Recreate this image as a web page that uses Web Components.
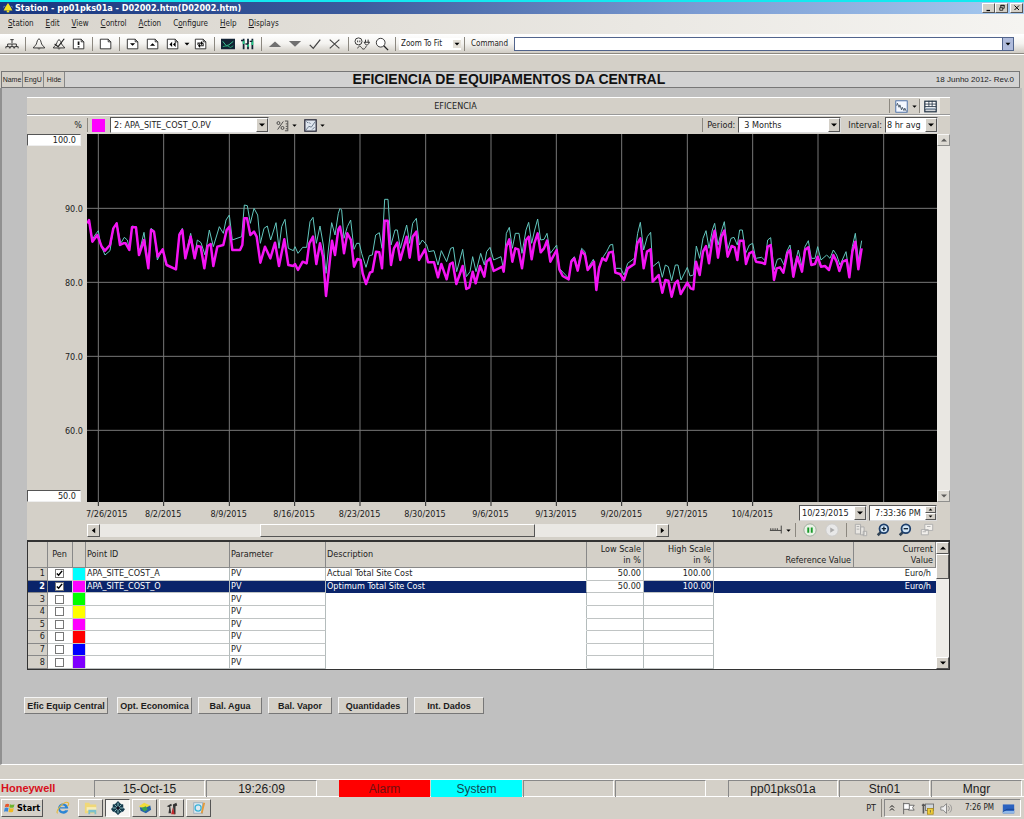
<!DOCTYPE html>
<html lang="pt">
<head>
<meta charset="utf-8">
<title>Station - pp01pks01a - D02002.htm</title>
<style>
  body { margin: 0; font: 9px/12px "DejaVu Sans Condensed", "DejaVu Sans", sans-serif; color: #1c1c1c; background: #d4d0c8; }
</style>
</head>
<body>
<station-window>
  <title-bar slot="top">Station - pp01pks01a - D02002.htm(D02002.htm)</title-bar>
  <menu-bar slot="top"></menu-bar>
  <command-bar slot="top"></command-bar>
  <display-header slot="top">EFICIENCIA DE EQUIPAMENTOS DA CENTRAL</display-header>
  <trend-panel></trend-panel>
  <nav-buttons></nav-buttons>
  <status-line slot="bottom"></status-line>
  <task-bar slot="bottom"></task-bar>
</station-window>

<script>
const RESET = `
  :host, *, *::before { box-sizing: border-box; }
  button, input, select { font: inherit; color: inherit; margin: 0; padding: 0; border: 0; border-radius: 0; background: none; outline: 0; appearance: none; min-width: 0; }
  button { display: flex; align-items: center; justify-content: center; flex: none; }
  .raised { background: #d4d0c8; border: 1px solid; border-color: #fff #555 #555 #fff; }
  .sep { flex: none; width: 1px; height: 14px; background: #8c8880; }
`;
function element(name, html, css) {
  customElements.define(name, class extends HTMLElement {
    connectedCallback() {
      if (this.shadowRoot) return;
      const root = this.attachShadow({ mode: 'open' });
      root.innerHTML = `<style>${RESET}${css}</style>` + (typeof html === 'function' ? html(this) : html);
    }
  });
}

const PAGE = '<path d="M1.5 2.5h9l3 3v8h-12z" fill="#fff" stroke="#222"/><path d="M10.500 2.500v3h3" fill="none" stroke="#222"/>';
const ICONS = {
  tree: '<path d="M8 3v4M3 11V8h10v3M8 8v3M6 3h4M1 11h4M6 11h4M11 11h4M1 11v2M5 11v2M6 11v2M10 11v2M11 11v2M15 11v2" stroke="#222" fill="none"/>',
  bell: '<path d="M8 2C6 3 6 5 5 8c-1 2-3 3-3.500 4.500h13C14 11 12 10 11 8 10 5 10 3 8 2zM7 13l1 1 1-1" fill="none" stroke="#222"/>',
  bellOff: '<path d="M8 3C6 4 6 6 5 8c-1 2-3 3-3.500 4.500h13C14 11 12 10 11 8 10 6 10 4 8 3zM7 13l1 1 1-1" fill="none" stroke="#222"/><path d="M3 8l4 3 7-9" fill="none" stroke="#222" stroke-width="1.300"/>',
  pageAlert: PAGE + '<path d="M7.500 5v4M7.500 10.500v1.500" stroke="#111" stroke-width="2"/>',
  page: PAGE,
  pageDown: PAGE + '<path d="M4.500 7h6l-3 3z"/>',
  pageUp: PAGE + '<path d="M4.500 10h6l-3-3z"/>',
  pageBack: PAGE + '<path d="M7 5.500v6l-3-3zM11 5.500v6l-3-3z"/>',
  pageRefresh: PAGE + '<path d="M4.500 9V7h4M10.500 7v3h-4" stroke="#222" fill="none" stroke-width="1.200"/><path d="M8 4.500v5l2.500-2.500zM7 7.500v5L4.500 10z"/>',
  trend: '<rect x="0" y="2" width="16" height="12" fill="#123"/><path d="M2 5l4 5 3-1 5-4" stroke="#3fd8a0" fill="none"/><path d="M2 11l5-1 4 2 3-2" stroke="#2a7" fill="none"/>',
  bars: '<path d="M3 2v12M8 2v12M13 2v12" stroke="#123" stroke-width="2"/><path d="M3 4v4M8 8v3M13 4v5" stroke="#2c8" stroke-width="2"/><path d="M0 4h3M5 8h3M10 5h3" stroke="#123" stroke-width="1.500"/>',
  up: '<path d="M1 11.500h14L8 5z" fill="#707070"/>',
  down: '<path d="M1 4.500h14L8 11z" fill="#707070"/>',
  check: '<path d="M2 9l4 4L14 3" fill="none" stroke="#444" stroke-width="1.500"/>',
  cross: '<path d="M2 3l11 10M13 3L2 13" stroke="#444" stroke-width="1.300"/>',
  assist: '<circle cx="4" cy="5" r="4" fill="none" stroke="#222"/><path d="M3 4v2M5.500 4v2M3 13c2-4 3-3 5 0 2 2 4 0 5-3M10 6h7M11 6c0 4 5 4 5 0M12 6V3M15 6V3" fill="none" stroke="#222"/>',
  search: '<circle cx="6.500" cy="6.500" r="5" fill="#fff" stroke="#222"/><path d="M10 10l5 5" stroke="#222" stroke-width="1.500"/>',
  caret: '<path d="M3 5.500h10L8 11z"/>',
  left: '<path d="M11 3v10L5 8z"/>', right: '<path d="M5 3v10l6-5z"/>',
  up2: '<path d="M2 11h12L8 5z"/>', down2: '<path d="M2 5h12l-6 6z"/>',
  percent: '<circle cx="3" cy="5" r="1.800" fill="none" stroke="#333"/><circle cx="8" cy="11" r="1.800" fill="none" stroke="#333"/><path d="M9 3L2 13M14.500 2v13M11 2.500h3M12 6h2M12 9h2M12 12h2M11 14.500h3" stroke="#333"/>',
  plotBox: '<rect x="1" y="1" width="14" height="14" fill="#dfe5ee" stroke="#223" stroke-width="1.500"/><path d="M2 14l4-5 3 1 5-7M3 3l2 2M10 13l3-3M6 4l2 2" fill="none" stroke="#567"/>',
  wave: '<rect x="1" y="1" width="14" height="14" fill="#f4f8ff" stroke="#335ea0"/><path d="M2 7l1-3 2 5 1-3 2 6 1-3 2 4 1-3 2 4" fill="none" stroke="#345"/>',
  grid: '<rect x="1" y="1.500" width="14" height="13" fill="#fff" stroke="#234" stroke-width="1.500"/><path d="M1 5h14M1 8h14M1 12h14M6 1v7M10 1v7" stroke="#234"/><path d="M2 10.500h12" stroke="#9ab" stroke-width="2"/>',
  ruler: '<path d="M1 8.500h13M2 6v2M4.500 6v2M7 6v2M9.500 6v2M14 3v9" stroke="#333"/>',
  pause: '<circle cx="8" cy="8" r="7" fill="#e9f3e6" stroke="#9aa89a"/><path d="M6 5v6M10 5v6" stroke="#1a9a2a" stroke-width="2.200"/>',
  play: '<circle cx="8" cy="8" r="7" fill="#e8e8e8" stroke="#ccc"/><path d="M6 5v6l5-3z" fill="#aaa"/>',
  copy: '<path d="M1.500 1.500h6v11h-6zM7.500 4.500h4v9h-4zM10.500 9.500h4v5h-4zM3 4h3M3 7h3" fill="#e8e6e2" stroke="#a8a8a8"/>',
  zoomIn: '<path d="M7 9l-5 5" stroke="#345" stroke-width="3"/><circle cx="9" cy="6.500" r="5" fill="#cfe4f6" stroke="#1d3f6c" stroke-width="2"/><path d="M6.500 6.500h5M9 4v5" stroke="#123" stroke-width="1.500"/>',
  zoomOut: '<path d="M7 9l-5 5" stroke="#345" stroke-width="3"/><circle cx="9" cy="6.500" r="5" fill="#cfe4f6" stroke="#1d3f6c" stroke-width="2"/><path d="M6.500 6.500h5" stroke="#123" stroke-width="1.500"/>',
  windows: '<path d="M5.500 1.500h9v7h-9zM1.500 7.500h8v6h-8zM3 10h4M8 4h4" fill="#f2f0ec" stroke="#aaa"/>',
  station: '<path d="M8 0l4 6 3 6H1l3-6z" fill="#f4e020"/><path d="M6 12h4v3H6z" fill="#f4e020"/><path d="M0 7l3-2M13 5l3 2" stroke="#9ad"/>',
  flagWin: '<path d="M2 3c2-1 3-1 5 0L6 7C4 6 3 6 1 7z" fill="#e8542a"/><path d="M8 3c2 1 4 1 6 0l-1 4c-2 1-4 1-6 0z" fill="#6db52d"/><path d="M1 8c2-1 3-1 5 0l-1 5c-2-1-3-1-5 0z" fill="#3a86d8"/><path d="M7 8c2 1 4 1 6 0l-1 5c-2 1-4 1-6 0z" fill="#f2b91e"/>',
  ie: '<path d="M14 8.500H4.500C5 12 9 12.500 10.500 10.500H14c-2 6-11 5-11.500-2C2.500 1 13.500 1 14 8.500zM5 7h5.500C10 4.500 5.500 4.500 5 7z" fill="#2a84d4"/><path d="M2 14C-2 13 9-1 14 2c1 1 0 3-1 4" fill="none" stroke="#e5b93a" stroke-width="1.200"/>',
  folder: '<path d="M1 2h5l1 2h7v10H1z" fill="#f0d878"/><path d="M3 7h11v4H3z" fill="#f7edb8"/><path d="M5 10h9v5h-2v-2H7v2H5z" fill="#7cc0cc"/>',
  honey: '<path d="M8 0l3 3 3 1v4l2 1-2 3-3 1-3 3-3-3-3-1-2-3 2-2V4l3-1z" fill="#153a4c"/><path d="M8 2v12M2 8h12M4 4l8 8M12 4l-8 8" stroke="#9cc" stroke-width="1"/><circle cx="8" cy="8" r="2" fill="#112"/>',
  globe: '<path d="M1 6l6-4 7 3-4 6z" fill="#f1dc3a"/><path d="M2 7l6 1 6-3 1 5-6 4-6-3z" fill="#2463a8"/><path d="M4 8l5-2 2 4-4 2z" fill="#3da34b"/>',
  tools: '<path d="M2 6l5-3 1 2-2 1 1 8H4l1-7zM9 4l4-2 1 3-2 1v9h-2z" fill="#333"/><path d="M9 7l2 8H7z" fill="#c2282c"/>',
  paint: '<rect x="2" y="2" width="10" height="12" fill="#dceaf2" stroke="#9ab"/><circle cx="7" cy="8" r="3.500" fill="none" stroke="#39b2d8" stroke-width="1.500"/><path d="M14 2l-3 12" stroke="#e39a3a" stroke-width="2"/>',
  chevrons: '<path d="M4 7l4-4 4 4M4 13l4-4 4 4" fill="none" stroke="#111" stroke-width="2"/>',
  flag: '<path d="M2 1v14M2 2h7v7H2M9 4h6l-2 3 2 3H8V9" fill="#fff" stroke="#555"/>',
  netLock: '<rect x="5.500" y="2.500" width="10" height="8" fill="#cfd6dc" stroke="#666"/><path d="M3 2v12M1 4h4" stroke="#555" stroke-width="2"/><rect x="8" y="8" width="7" height="7" fill="#f0cf3a" stroke="#a8861a"/><path d="M11.500 10v3" stroke="#554"/>',
  sound: '<path d="M1 6h3l4-4v12l-4-4H1z" fill="#eee" stroke="#777"/><path d="M10 5c2 2 2 4 0 6M12 3c3 3 3 7 0 10" fill="none" stroke="#888"/>',
  desktop: '<path d="M1 3h14v11H1z" fill="#2b62c0"/><path d="M1 11h14v3H1z" fill="#8fb8e8"/><path d="M1 12l5-3h9" fill="none" stroke="#14408c"/>',
  minimize: '<path d="M3 13h7" stroke="#000" stroke-width="2.500"/>',
  restore: '<path d="M5.500 2.500h7v6h-7zM5 3.500h8" fill="none" stroke="#000" stroke-width="1.500"/><path d="M3.500 7.500h6v5h-6z" fill="#d4d0c8" stroke="#000" stroke-width="1.500"/>',
  close: '<path d="M3 3l9 9M12 3l-9 9" stroke="#000" stroke-width="2"/>'
};
element('line-icon',
  host => `<svg viewBox="0 0 16 16" aria-hidden="true">${ICONS[host.getAttribute('name')]}</svg>`,
  `:host { display: block; flex: none; width: var(--icon, 14px); height: var(--icon, 14px); } svg { display: block; width: 100%; height: 100%; overflow: visible; }`);

/* window frame: fixed bars above and below, display area between them */
element('station-window',
  `<slot name="top"></slot><main><slot></slot></main><slot name="bottom"></slot>`,
  `:host { display: flex; flex-direction: column; min-height: 100vh; }
   main { flex: 1; background: #c0c0c0; border-left: 2px solid #909090; border-right: 2px solid #d4d0c8; border-bottom: 1px solid #fff; padding: 9px 72px 0 25px; }`);

element('title-bar',
  `<line-icon name="station"></line-icon><h1><slot></slot></h1>
   <button class="raised" aria-label="Minimize"><line-icon name="minimize"></line-icon></button><button class="raised" aria-label="Restore"><line-icon name="restore"></line-icon></button><button class="raised last" aria-label="Close"><line-icon name="close"></line-icon></button>`,
  `:host { display: flex; align-items: center; height: 14px; border-top: 2px solid #14e8f0; background: linear-gradient(90deg, #17357e, #3c5c9e 35%, #7b9bd2 68%, #a6caf0); color: #fff; padding: 0 1px 0 3px; }
   h1 { flex: 1; margin: 0; padding-left: 2px; font-size: 9px; line-height: 12px; font-weight: bold; white-space: nowrap; }
   line-icon { --icon: 10px; } button { width: 13px; height: 10px; } button line-icon { --icon: 8px; } .last { margin-left: 2px; }`);

element('menu-bar',
  `<nav>${['<u>S</u>tation','<u>E</u>dit','<u>V</u>iew','<u>C</u>ontrol','<u>A</u>ction','C<u>o</u>nfigure','<u>H</u>elp','<u>D</u>isplays'].map(t => `<a href="#">${t}</a>`).join('')}</nav>`,
  `:host { display: block; background: linear-gradient(90deg, #d8d4cc, #f5f4f1); }
   nav { display: flex; gap: 12px; padding: 4px 8px; font-size: 8px; } a { color: inherit; text-decoration: none; }`);

const tool = (name, label) => `<button class="tool" aria-label="${label}"><line-icon name="${name}"></line-icon></button>`;
const gap = '<span class="gap"><i class="sep"></i></span>';
element('command-bar',
  tool('tree','System') + gap + tool('bell','Alarms') + tool('bellOff','Acknowledge') + tool('pageAlert','Messages') + gap + tool('page','Display') + gap
  + tool('pageDown','Page down') + tool('pageUp','Page up') + tool('pageBack','Back') + `<button class="narrow" aria-label="History"><line-icon name="caret"></line-icon></button>` + tool('pageRefresh','Reload') + gap
  + tool('trend','Trend') + tool('bars','Group') + gap + tool('up','Raise') + tool('down','Lower') + tool('check','Enter') + tool('cross','Cancel') + gap
  + tool('assist','Connect') + tool('search','Zoom') + gap
  + `<span class="zoom"><select aria-label="Zoom level"><option>Zoom To Fit</option></select><line-icon name="caret"></line-icon></span>` + gap
  + `<label for="cmd">Command</label><span class="cmd"><input id="cmd"><button aria-label="Command history"><line-icon name="caret"></line-icon></button></span>`,
  `:host { display: flex; align-items: center; height: 20px; padding: 0 10px 0 2px; font-size: 8px; background: linear-gradient(#fff, #f4f3f0 50%, #d0ccc4); border-bottom: 1px solid #8c8880; }
   .tool { width: 20px; height: 18px; } .gap { width: 7px; flex: none; display: flex; justify-content: center; } .narrow { width: 8px; }
   .narrow, .zoom, .cmd { --icon: 8px; }
   .zoom { display: flex; align-items: center; width: 62px; background: #fff; padding-left: 2px; } .zoom select { flex: 1; } .zoom line-icon { background: #e4e0d8; }
   label { padding: 0 6px 0 3px; } .cmd { flex: 1; display: flex; height: 14px; border: 1px solid #51648c; background: #fff; } .cmd input { flex: 1; } .cmd button { width: 11px; background: #b0bcdc; border-left: 1px solid #51648c; }`);

element('display-header',
  `<div class="ribbon"></div><div class="bar"><button>Name</button><button>EngU</button><button>Hide</button><h2><slot></slot></h2><span>18 Junho 2012- Rev.0</span></div>`,
  `:host { display: block; background: #d4d0c8; font-family: "Liberation Sans", Arial, sans-serif; }
   .ribbon { height: 17px; border-top: 1px solid #fff; }
   .bar { display: flex; align-items: stretch; height: 17px; margin: 0 4px 0 1px; border: 1px solid #777; background: #d2d2d2; }
   button { width: 21px; font-size: 7px; border-right: 1px solid #888; white-space: nowrap; background: #d4d0c8; }
   h2 { flex: 1; margin: 0; padding-left: 17px; text-align: center; font-size: 14px; line-height: 15px; white-space: nowrap; color: #111; }
   span { font-size: 8px; line-height: 15px; padding-right: 5px; }`);

element('drop-down',
  host => `<label for="s">${host.getAttribute('label')}</label><span class="box"><select id="s"><option>${host.textContent}</option></select><i class="raised"><line-icon name="down2"></line-icon></i></span>`,
  `:host { display: flex; align-items: center; gap: 3px; } :host([quiet]) label { display: none; }
   .box { flex: 1; display: flex; width: var(--box); height: 16px; background: #fff; border: 1px solid; border-color: #555 #ddd #ddd #555; }
   select { flex: 1; height: 14px; line-height: 14px; padding-left: var(--indent, 3px); } i { width: 12px; display: grid; place-items: center; --icon: 8px; }`);

/* samples are in thirds of a pixel of an 850 x 368 plot; x is relative to each block's start */
const OPTIMUM = [
  [-21, '22,100 27,90 37,155 52,135 65,170 75,182 90,165 100,115 110,100 120,165 130,160 137,160 148,180 156,112 168,112 177,195 192,150 205,235 213,120 222,125 233,200 248,178 260,225 288,238 298,135 307,120 316,205 332,140 344,205 352,168 362,170 373,235 383,168 392,162 400,228 412,170 430,165 440,120 448,110 457,180 480,180 487,165 493,85 501,85 511,135 522,125 530,140 541,218 555,170 571,205 585,158 597,228 613,148 625,225 640,228 645,222 654,240 668,215 680,220 688,160 699,140 709,222 720,160 729,200 738,318 745,255 756,152 765,195 775,118'],
  [759, '0,110 6,140 12,190 22,130 33,150 42,230 52,207 62,210 68,250 78,282 90,248 97,245 108,185 118,187 126,235 134,92 143,92 153,225 162,175 172,158 181,210 200,140 209,203 218,140 229,125 237,210 255,178 264,217 282,217 294,262 304,222 320,268 330,222 338,218 349,282 368,228 379,297 388,292 398,245 407,280 420,228 433,260 440,215 450,205 461,243 487,230 491,245 499,170 508,148 517,215 526,175 535,178 546,235 558,150 566,140 575,208 583,160 593,130 602,187 612,175 621,152 631,215 650,180 658,238 668,258 686,268 694,215 703,205 713,242 725,183 735,195 743,240 762,215 769,300 777,235'],
  [1539, '7,205 18,212 27,188 38,185 46,248 60,252 72,270 83,235 103,222 112,160 121,145 131,235 141,185 152,178 158,275 176,255 187,308 196,270 205,272 215,320 225,280 233,272 242,312 262,278 272,295 280,298 288,215 299,255 309,185 318,168 327,220 337,150 344,122 354,203 364,140 373,122 383,200 395,168 404,172 412,210 419,152 430,152 438,222 448,190 458,185 468,215 485,218 495,222 503,170 512,165 522,270 530,235 540,232 550,248 562,190 570,180 580,260 592,200 606,245 615,180 625,172 634,225 645,222 653,200 663,230 675,228 687,240 700,195 710,215 718,243 728,215 740,210 748,262 757,185 766,155 775,238 785,175']];
const ACTUAL = [
  [-21, '27,88 37,148 45,135 55,122 62,165 75,195 90,182 100,115 110,98 122,160 133,142 142,150 148,175 156,108 166,110 177,190 192,127 205,228 213,115 222,122 232,210 248,178 258,225 288,238 298,130 307,115 316,200 332,130 344,195 352,150 363,158 375,195 388,120 400,170 418,110 430,130 438,90 448,75 457,150 485,140 493,45 502,47 511,100 522,55 533,75 541,160 552,115 562,108 572,150 588,98 597,175 605,110 615,88 625,175 640,182 645,170 654,190 668,172 680,172 690,95 699,82 709,160 720,108 730,165 738,250 745,180 755,98 765,135 775,70'],
  [759, '0,55 5,60 12,145 22,110 32,90 42,178 50,160 58,160 65,190 78,232 88,197 97,195 107,135 118,128 126,175 134,28 144,28 153,165 165,120 172,120 181,175 200,105 209,160 218,100 229,85 238,165 247,150 260,165 266,185 282,182 294,225 304,182 320,215 332,175 340,172 350,245 368,178 379,260 390,245 398,200 408,245 422,190 433,225 440,185 450,172 461,210 483,200 491,240 499,130 508,112 517,175 526,130 537,130 546,190 558,120 566,97 575,160 584,120 593,87 602,150 612,148 621,130 631,190 650,165 658,235 686,265 694,210 703,200 713,235 725,175 735,185 743,235 760,208 769,295 777,230'],
  [1539, '10,200 20,185 30,165 38,163 46,235 62,235 72,255 83,220 103,205 113,130 121,97 131,180 142,140 152,127 158,230 176,215 187,262 196,225 205,230 215,272 226,225 234,225 243,270 262,232 270,258 280,255 289,168 299,205 309,145 318,122 327,175 337,120 344,100 354,165 364,125 373,95 383,180 393,145 402,142 412,165 419,120 427,120 437,190 448,165 458,160 467,205 485,202 495,212 503,150 512,143 522,240 532,208 542,205 552,225 560,185 570,165 580,240 595,180 606,230 615,170 625,152 634,205 645,205 653,170 663,210 680,195 690,205 700,180 710,195 720,225 738,185 748,250 757,170 766,130 775,210 785,152']];
const trace = blocks => blocks.map(([x0, pts]) => pts.split(' ').map(p => { const [x, y] = p.split(',').map(Number); return `${x + x0},${y + 168}`; }).join(' ')).join(' ');
const weeks = Array.from({ length: 13 }, (_, i) => 34 + Math.round(i * 196.3));

element('trend-plot',
  `<div class="scale"><input value="100.0" aria-label="High scale"><span>90.0</span><span>80.0</span><span>70.0</span><div><span>60.0</span><input value="50.0" aria-label="Low scale"></div></div>
   <svg viewBox="0 0 2550 1104" preserveAspectRatio="none" role="img" aria-label="Trend">
     <g stroke="#777" stroke-width="1">${weeks.map(x => `<path vector-effect="non-scaling-stroke" d="M${x} 0V1104"/>`).join('')}${[223, 445, 667, 889].map(y => `<path vector-effect="non-scaling-stroke" d="M0 ${y}H2550"/>`).join('')}</g>
     <polyline vector-effect="non-scaling-stroke" points="${trace(ACTUAL)}" fill="none" stroke="#62c6be" stroke-width="1"/>
     <polyline vector-effect="non-scaling-stroke" points="${trace(OPTIMUM)}" fill="none" stroke="#f414f4" stroke-width="2.500" stroke-linejoin="round"/>
   </svg>
   <div class="vbar"><button class="raised" aria-label="Scroll up"><line-icon name="up2"></line-icon></button><button class="raised" aria-label="Scroll down"><line-icon name="down2"></line-icon></button></div>
   <svg class="ticks" viewBox="0 0 2550 4" preserveAspectRatio="none" aria-hidden="true">${weeks.slice(0, 11).map(x => `<path vector-effect="non-scaling-stroke" stroke="#222" d="M${x} 0V4"/>`).join('')}</svg>`,
  `:host { display: grid; grid-template-columns: 60px 1fr 13px; }
   .scale { display: grid; grid-template-rows: 69fr 74fr 74fr 74fr 77fr; text-align: right; padding-right: 6px; }
   .scale div { display: flex; flex-direction: column; justify-content: space-between; }
   .scale span { margin-right: -2px; }
   input { width: 100%; height: 12px; background: #fff; text-align: right; padding-right: 4px; border: 1px solid; border-color: #555 #eee #eee #555; }
   svg { display: block; width: 100%; height: 368px; background: #000; }
   .ticks { grid-column: 2; height: 4px; background: none; }
   .vbar { display: flex; flex-direction: column; justify-content: space-between; background: #e9e7e2; } .vbar button { height: 12px; --icon: 8px; opacity: .6; }`);

element('trend-panel',
  `<header><h3>EFICENCIA</h3><div class="group modes"><i class="sep"></i><button aria-label="Trend view"><line-icon name="wave"></line-icon></button><button class="caret" aria-label="Trend options"><line-icon name="caret"></line-icon></button><i class="sep"></i><button class="on" aria-label="Table view"><line-icon name="grid"></line-icon></button></div></header>
   <div class="pens"><span class="unit">%</span><i class="sep"></i><i class="swatch"></i><drop-down quiet class="pen" label="Pen">2: APA_SITE_COST_O.PV</drop-down>
     <button aria-label="Scale"><line-icon name="percent"></line-icon></button><button class="caret" aria-label="Scale options"><line-icon name="caret"></line-icon></button>
     <button class="second" aria-label="Plot"><line-icon name="plotBox"></line-icon></button><button class="caret" aria-label="Plot options"><line-icon name="caret"></line-icon></button>
     <span class="fill"></span><i class="sep"></i><drop-down class="period" label="Period:">3 Months</drop-down><drop-down class="interval" label="Interval:">8 hr avg</drop-down></div>
   <trend-plot></trend-plot>
   <div class="axis"><div class="dates">${['7/26/2015','8/2/2015','8/9/2015','8/16/2015','8/23/2015','8/30/2015','9/6/2015','9/13/2015','9/20/2015','9/27/2015','10/4/2015'].map(d => `<span>${d}</span>`).join('')}</div>
     <drop-down quiet class="date" label="End date">10/23/2015</drop-down><span class="time"><input value="7:33:36 PM" aria-label="End time"><span class="spin"><button class="raised" aria-label="Later"><line-icon name="up2"></line-icon></button><button class="raised" aria-label="Earlier"><line-icon name="down2"></line-icon></button></span></span></div>
   <div class="scroll"><div class="hbar"><button class="raised" aria-label="Scroll left"><line-icon name="left"></line-icon></button><i class="t1"></i><i class="thumb raised"></i><i class="t2"></i><button class="raised" aria-label="Scroll right"><line-icon name="right"></line-icon></button></div>
     <div class="group tools"><button class="cursor" aria-label="Cursor"><line-icon name="ruler"></line-icon></button><button class="caret" aria-label="Cursor options"><line-icon name="caret"></line-icon></button><i class="sep"></i><button aria-label="Pause"><line-icon name="pause"></line-icon></button><button aria-label="Play"><line-icon name="play"></line-icon></button><i class="sep"></i><button aria-label="Copy"><line-icon name="copy"></line-icon></button><button aria-label="Zoom in"><line-icon name="zoomIn"></line-icon></button><button aria-label="Zoom out"><line-icon name="zoomOut"></line-icon></button><button aria-label="Windows"><line-icon name="windows"></line-icon></button></div></div>
   <pen-table></pen-table>`,
  `:host { display: block; background: #d4d0c8; border-top: 1px solid #fff; }
   header { display: flex; height: 17px; border-bottom: 1px solid #999; } h3 { flex: 1; margin: 0; font-size: 9px; line-height: 16px; font-weight: normal; text-align: center; }
   .group, .pens { display: flex; align-items: center; }
   .modes { width: 66px; padding-left: 5px; } .modes button { width: 17px; margin-left: 3px; } .modes .caret { margin: 0 1px 0 0; } .modes .on { background: #eae8e4; width: 20px; margin: 0; height: 16px; }
   .modes .caret, .pens .caret, .tools .caret { width: 8px; --icon: 7px; } .modes { --icon: 13px; }
   .pens { height: 19px; --icon: 13px; border-top: 1px solid #fff; } .unit { width: 60px; text-align: right; padding-right: 5px; } .swatch { width: 13px; height: 13px; background: #f0f; margin: 0 5px 0 4px; }
   .pen { --box: 159px; margin-right: 6px; } .pens button { width: 15px; } .second { margin-left: 5px; } .fill { flex: 1; }
   .period { --box: 103px; --indent: 5px; padding: 0 7px 0 4px; } .interval { --box: 53px; --indent: 1px; margin-right: 12px; }
   .axis { display: flex; padding: 0 13px 0 38px; height: 14px; align-items: center; }
   .dates { flex: 1; display: grid; grid-template-columns: repeat(11, 1fr); margin-right: 14px; text-align: center; padding-top: 2px; } .dates span:first-child { text-align: right; padding-right: 3px; }
   .date { --box: 68px; --indent: 2px; } .time { display: flex; width: 68px; margin-left: 2px; background: #fff; border: 1px solid; border-color: #555 #ddd #ddd #555; height: 16px; }
   .time input { flex: 1; padding-left: 5px; } .spin { width: 11px; flex: none; display: flex; flex-direction: column; --icon: 5px; } .spin button { flex: 1; }
   .scroll { display: flex; align-items: center; justify-content: space-between; height: 20px; padding: 0 12px 0 60px; gap: 98px; }
   .hbar { flex: 1; display: flex; height: 13px; --icon: 9px; background: #eae8e4; } .hbar button { width: 13px; } .t1 { flex: 160; } .thumb { flex: 274; } .t2 { flex: 121; }
   .tools { --icon: 14px; } .tools button { width: 22px; } .tools .cursor { width: 17px; } .tools .sep { margin: 0 3px; }`);

const COLOURS = ['#00ffff','#ff00ff','#00ff00','#ffff00','#ff00ff','#ff0000','#0000ff','#8000ff'];
const NAMED = [['APA_SITE_COST_A','Actual Total Site Cost'], ['APA_SITE_COST_O','Optimum Total Site Cost']];
element('pen-table',
  `<table><colgroup><col style="width:20px"><col style="width:25px"><col style="width:13px"><col style="width:144px"><col style="width:96px"><col><col style="width:57px"><col style="width:70px"><col style="width:140px"><col style="width:82px"></colgroup>
   <thead><tr><th></th><th class="c">Pen</th><th></th><th>Point ID</th><th>Parameter</th><th>Description</th><th class="r">Low Scale<br>in %</th><th class="r">High Scale<br>in %</th><th class="r">Reference Value</th><th class="r">Current<br>Value</th></tr></thead>
   <tbody>${COLOURS.map((c, i) => { const n = NAMED[i]; return `<tr class="${i === 1 ? 'sel' : ''}"><td class="no">${i + 1}</td><td class="c"><input type="checkbox" aria-label="Pen ${i + 1}" ${n ? 'checked' : ''}></td><td style="background:${c}"></td><td>${n ? n[0] : ''}</td><td>PV</td><td class="open">${n ? n[1] : ''}</td><td class="r plain">${n ? '50.00' : ''}</td><td class="r">${n ? '100.00' : ''}</td><td class="open last"></td><td class="open last r">${n ? 'Euro/h' : ''}</td></tr>`; }).join('')}</tbody></table>
   <div class="vbar"><button class="raised" aria-label="Scroll up"><line-icon name="up2"></line-icon></button><i class="thumb raised"></i><span></span><button class="raised" aria-label="Scroll down"><line-icon name="down2"></line-icon></button></div>`,
  `:host { display: flex; border: 1px solid #333; border-width: 2px 1px 1px; background: #fff; }
   table { flex: 1; width: 0; height: 127px; border-collapse: separate; border-spacing: 0; table-layout: fixed; }
   th { font-weight: normal; text-align: left; background: #d4d0c8; height: 26px; padding: 0 2px 1px 1px; line-height: 11px; border-right: 1px solid #888; border-bottom: 1px solid #888; white-space: nowrap; vertical-align: middle; }
   th.r { vertical-align: bottom; }
   td { padding: 0 2px 0 1px; line-height: 11px; border-right: 1px solid #b4bcbc; border-bottom: 1px solid #c0c4c4; white-space: nowrap; overflow: hidden; }
   th.c, td.c { text-align: center; } th.r, td.r { text-align: right; }
   .no { background: #d4d0c8; text-align: right; border-color: #888; } .open { border-bottom-color: transparent; } .last { border-right-color: transparent; padding-right: 4px; }
   td:nth-child(2), td:nth-child(3) { border-right-color: #ddd; }
   .sel td:not(.plain):not(:nth-child(3)) { background-color: #0a246a; color: #fff; } .sel .no { font-weight: bold; }
   input { display: block; width: 9px; height: 9px; margin: 0 auto; border: 1px solid #777; background: #fff; }
   input:checked { background: #fff url("data:image/svg+xml,%3Csvg xmlns='http://www.w3.org/2000/svg' viewBox='0 0 8 8'%3E%3Cpath d='M1 4l2 2 4-5' fill='none' stroke='black' stroke-width='1.700'/%3E%3C/svg%3E"); }
   .vbar { width: 13px; display: flex; flex-direction: column; background: #eeece8; --icon: 8px; } .vbar span { flex: 1; } .vbar button { height: 12px; } .thumb { height: 25px; }`);

element('nav-buttons',
  ['Efic Equip Central','Opt. Economica','Bal. Agua','Bal. Vapor','Quantidades','Int. Dados'].map(t => `<button>${t}</button>`).join(''),
  `:host { display: flex; gap: 6px; margin: 27px 0 20px -3px; font: bold 9px/12px "Liberation Sans", Arial, sans-serif; }
   button { height: 17px; width: 70px; white-space: nowrap; background: #d4d0c8; border: 1px solid; border-color: #f4f4f4 #777 #777 #f4f4f4; }
   button:nth-of-type(1) { width: 84px; margin-right: 3px; } button:nth-of-type(2) { width: 75px; } button:nth-of-type(3), button:nth-of-type(4) { width: 64px; }`);

element('status-line',
  `<b>Honeywell</b><span class="cell">15-Oct-15</span><span class="cell">19:26:09</span><i></i><span class="alarm">Alarm</span><span class="system">System</span><span class="cell"></span><span class="cell"></span><i></i><span class="cell">pp01pks01a</span><span class="cell">Stn01</span><span class="cell">Mngr</span>`,
  `:host { display: grid; grid-template-columns: 92fr 111fr 111fr 20fr 91fr 91fr 91fr 91fr 20fr 110fr 91fr 91fr; column-gap: 1px; padding: 0 2px 0 1px; margin-top: 14px; height: 18px; border-top: 1px solid #fff; border-bottom: 1px solid #fff; font: 12px/16px "Liberation Sans", Arial, sans-serif; text-align: center; }
   b { color: #d8101c; text-align: left; font-size: 11px; } .cell { border: 1px solid; border-color: #888 #fff #fff #888; border-bottom: 0; }
   .alarm { background: #f00; color: #701010; padding-top: 1px; } .system { background: #0ff; color: #124850; padding-top: 1px; }`);

element('task-bar',
  `<button class="raised start"><line-icon name="flagWin"></line-icon>Start</button><button class="flat" aria-label="Browser"><line-icon name="ie"></line-icon></button>
   ${[['folder','Files'],['honey','Station'],['globe','Network'],['tools','Tools'],['paint','Paint']].map(([n, l]) => `<button class="raised app ${n}" aria-label="${l}"><line-icon name="${n}"></line-icon></button>`).join('')}
   <span class="fill"></span><span class="lang">PT</span><i class="sep"></i><div class="tray"><line-icon class="small" name="chevrons"></line-icon><line-icon name="flag"></line-icon><line-icon name="netLock"></line-icon><line-icon name="sound"></line-icon><time>7:26 PM</time><line-icon name="desktop"></line-icon></div>`,
  `:host { display: flex; align-items: center; height: 22px; padding: 0 3px 0 1px; gap: 2px; }
   .start { width: 42px; height: 18px; font-weight: bold; color: #000; gap: 1px; --icon: 12px; } .flat { width: 26px; margin-left: 5px; }
   .app { width: 25px; height: 18px; } .honey { background: #f6f5f2; border-color: #555 #fff #fff #555; }
   .fill { flex: 1; } .lang { margin-right: 3px; } .sep { height: 18px; }
   .tray { display: flex; align-items: center; gap: 6px; height: 18px; width: 137px; padding: 0 0 0 3px; border: 1px solid; border-color: #888 #fff #fff #888; --icon: 13px; } .small { --icon: 8px; } time { margin: 0 2px 0 6px; font-size: 8px; white-space: nowrap; }`);
</script>
</body>
</html>
